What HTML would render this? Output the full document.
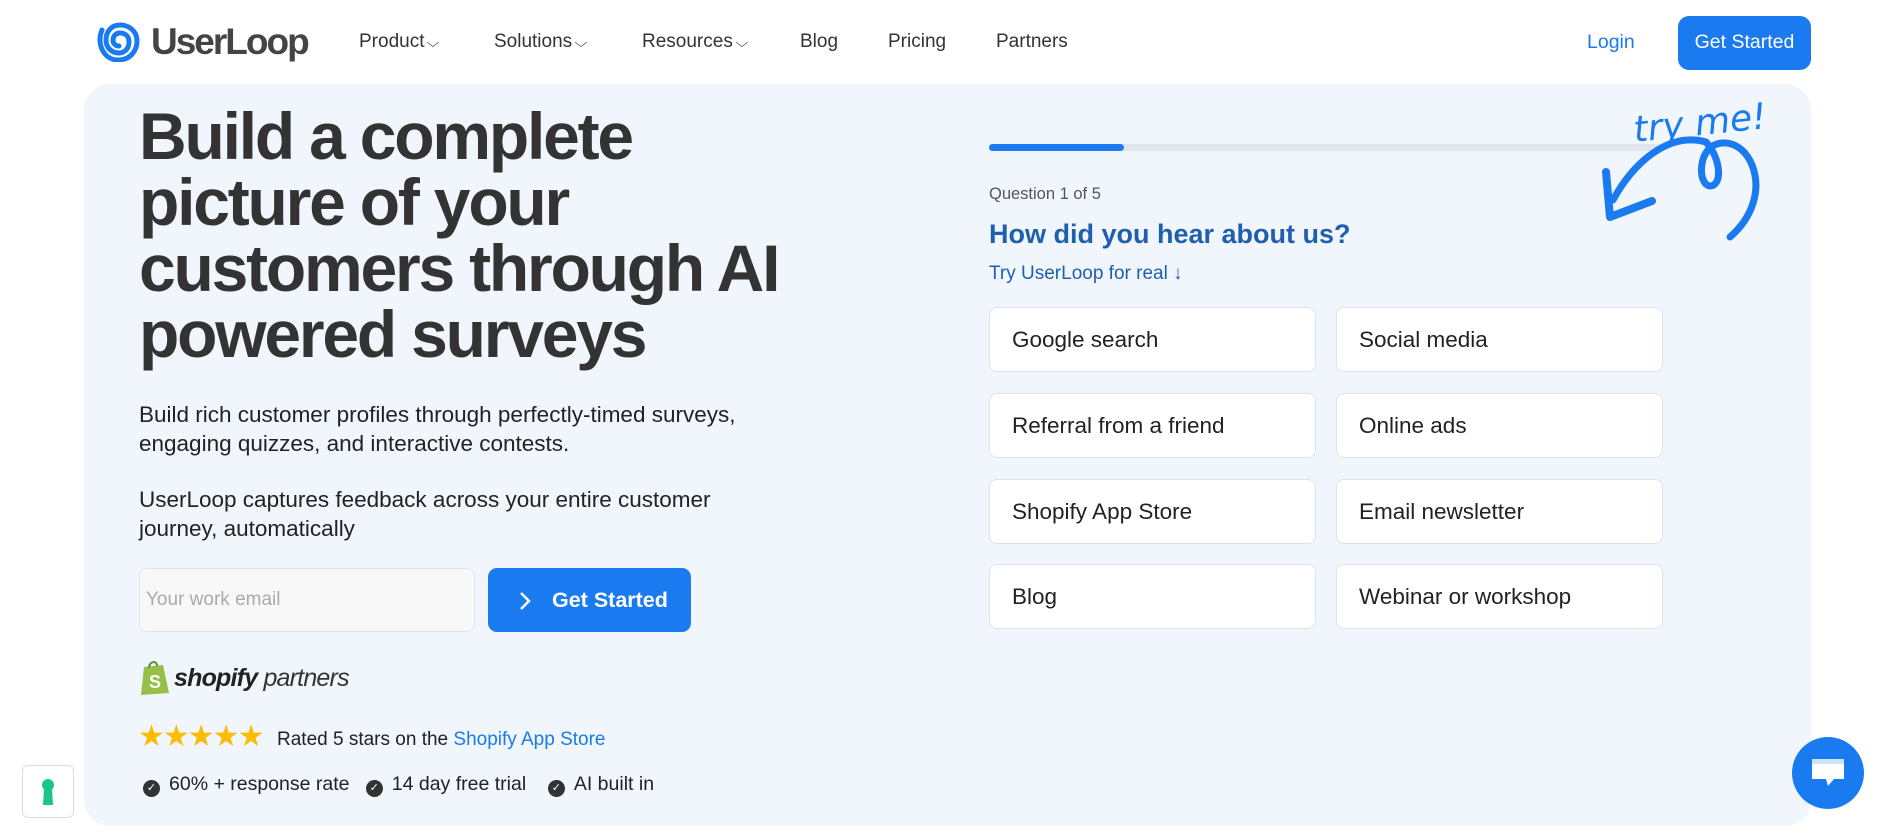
<!DOCTYPE html>
<html><head><meta charset="utf-8"><style>
*{box-sizing:border-box;margin:0;padding:0}
body{width:1891px;height:834px;background:#fff;font-family:"Liberation Sans",sans-serif;position:relative;overflow:hidden;color:#222}
.a{position:absolute}
.nav{font-size:19px;color:#333;top:31px}
.nav small{font-size:13px;display:inline-block;transform:scaleX(1.3);margin-left:4px}
.panel{left:84px;top:84px;width:1727px;height:742px;background:#f1f6fd;border-radius:26px}
h1{position:absolute;left:139px;top:103px;font-size:66px;line-height:66px;font-weight:700;letter-spacing:-2.2px;color:#333}
.p{left:139px;font-size:22.5px;line-height:29px;color:#222}
.opt{position:absolute;width:327px;height:65px;background:#fff;border:1px solid #dde3ea;border-radius:8px;font-size:22.5px;color:#222;padding-left:22px;line-height:63px}
.chk{display:inline-block;width:17px;height:17px;border-radius:50%;background:#333;color:#fff;font-size:11px;line-height:17px;text-align:center;vertical-align:-1px;margin-right:9px}
</style></head><body>
<svg class="a" style="left:96px;top:22px" width="44" height="40" viewBox="0 0 44 40"><path d="M6 8 C0 22 8 38 22 38 C34 38 41 29 41 19 C41 9 33 3 24 3 C15 3 10 10 10 18 C10 26 16 31 23 31 C29 31 33 26 33 20 C33 14 29 11 24 11 C20 11 17 14 17 18 C17 22 20 24 23 24" fill="none" stroke="#1a7af0" stroke-width="5" stroke-linecap="round"/></svg>
<div class="a" style="left:151px;top:21px;font-size:37px;font-weight:700;color:#444;letter-spacing:-2px">UserLoop</div>
<div class="a nav" style="left:359px">Product<small>⌵</small></div>
<div class="a nav" style="left:494px">Solutions<small>⌵</small></div>
<div class="a nav" style="left:642px">Resources<small>⌵</small></div>
<div class="a nav" style="left:800px">Blog</div>
<div class="a nav" style="left:888px">Pricing</div>
<div class="a nav" style="left:996px">Partners</div>
<div class="a" style="left:1587px;top:31px;font-size:19.5px;color:#1a7af0">Login</div>
<div class="a" style="left:1678px;top:16px;width:133px;height:54px;background:#1a7af0;border-radius:11px;color:#fff;font-size:19.5px;text-align:center;line-height:52px">Get Started</div>
<div class="a panel"></div>
<h1>Build a complete<br>picture of your<br>customers through AI<br>powered surveys</h1>
<div class="a p" style="top:400px">Build rich customer profiles through perfectly-timed surveys,<br>engaging quizzes, and interactive contests.</div>
<div class="a p" style="top:485px">UserLoop captures feedback across your entire customer<br>journey, automatically</div>
<div class="a" style="left:139px;top:568px;width:336px;height:64px;background:#f8f8f8;border:1px solid #e3e3e3;border-radius:8px;font-size:19px;color:#aaa;padding-left:6px;line-height:62px">Your work email</div>
<div class="a" style="left:488px;top:568px;width:203px;height:64px;background:#1a7af0;border-radius:9px;color:#fff;font-size:21.5px;font-weight:700;line-height:64px;padding-left:64px">Get Started</div>
<svg class="a" style="left:518px;top:591px" width="14" height="20"><path d="M3 2 L11 10 L3 18" fill="none" stroke="#fff" stroke-width="2.5"/></svg>
<svg class="a" style="left:139px;top:659px" width="32" height="37" viewBox="0 0 32 37"><path d="M5 8 L24 6 L30 34 L2 36 Z" fill="#95bf47"/><path d="M10 9 C10 2 18 1 18 7" fill="none" stroke="#5e8e3e" stroke-width="2"/><text x="10" y="29" font-size="18" font-weight="700" fill="#fff" font-family="Liberation Sans">S</text></svg>
<div class="a" style="left:174px;top:664px;font-size:25px;color:#222;font-style:italic;letter-spacing:-0.8px"><b>shopify</b> <span style="font-weight:400;color:#333">partners</span></div>
<div class="a" style="left:138px;top:719px;font-size:30px;color:#fbbc05;letter-spacing:-2px">★★★★★</div>
<div class="a" style="left:277px;top:729px;font-size:19px;color:#222">Rated 5 stars on the <span style="color:#1a7af0">Shopify App Store</span></div>
<div class="a" style="left:143px;top:773px;font-size:19.5px;color:#222"><span class="chk">✓</span>60% + response rate &nbsp; <span class="chk">✓</span>14 day free trial &nbsp;&nbsp; <span class="chk">✓</span>AI built in</div>
<div class="a" style="left:989px;top:144px;width:675px;height:7px;background:#e1e6ec;border-radius:4px"></div>
<div class="a" style="left:989px;top:144px;width:135px;height:7px;background:#1a7af0;border-radius:4px"></div>
<div class="a" style="left:989px;top:185px;font-size:16.5px;color:#555">Question 1 of 5</div>
<div class="a" style="left:989px;top:219px;font-size:27px;font-weight:700;color:#1f5fae">How did you hear about us?</div>
<div class="a" style="left:989px;top:263px;font-size:19px;color:#1f5fae">Try UserLoop for real ↓</div>
<div class="opt" style="left:989px;top:307px">Google search</div>
<div class="opt" style="left:1336px;top:307px">Social media</div>
<div class="opt" style="left:989px;top:393px">Referral from a friend</div>
<div class="opt" style="left:1336px;top:393px">Online ads</div>
<div class="opt" style="left:989px;top:479px">Shopify App Store</div>
<div class="opt" style="left:1336px;top:479px">Email newsletter</div>
<div class="opt" style="left:989px;top:564px">Blog</div>
<div class="opt" style="left:1336px;top:564px">Webinar or workshop</div>
<svg class="a" style="left:0;top:0" width="1891" height="834"><g fill="none" stroke="#1a7af0" stroke-linecap="round" stroke-linejoin="round">
<text x="1633" y="135" font-size="36" fill="#1a7af0" stroke="none" font-family="DejaVu Sans" font-style="italic" transform="rotate(-6 1700 120)">try me!</text>
<path d="M1730 237 C1752 218 1762 190 1752 165 C1742 140 1718 138 1708 150 C1698 162 1700 185 1710 186 C1722 186 1722 160 1706 142 C1670 132 1635 160 1613 200" stroke-width="7"/>
<path d="M1606 172 L1610 217 L1652 201" stroke-width="8"/></g></svg>
<div class="a" style="left:22px;top:765px;width:52px;height:53px;background:#fff;border:1px solid #ddd;border-radius:6px"></div>
<svg class="a" style="left:38px;top:777px" width="20" height="30"><circle cx="10" cy="8" r="6" fill="#1ec38b"/><path d="M6 10 L14 10 L15 28 L5 28 Z" fill="#1ec38b"/></svg>
<div class="a" style="left:1792px;top:737px;width:72px;height:72px;border-radius:50%;background:#1a7af0"></div>
<svg class="a" style="left:1808px;top:755px" width="40" height="36"><path d="M4 4 L36 4 L36 24 L26 24 L20 31 L18 24 L4 24 Z" fill="#fff"/><path d="M4 4 L36 4 L36 9 L4 9Z" fill="#cfe2fb"/></svg>
</body></html>
